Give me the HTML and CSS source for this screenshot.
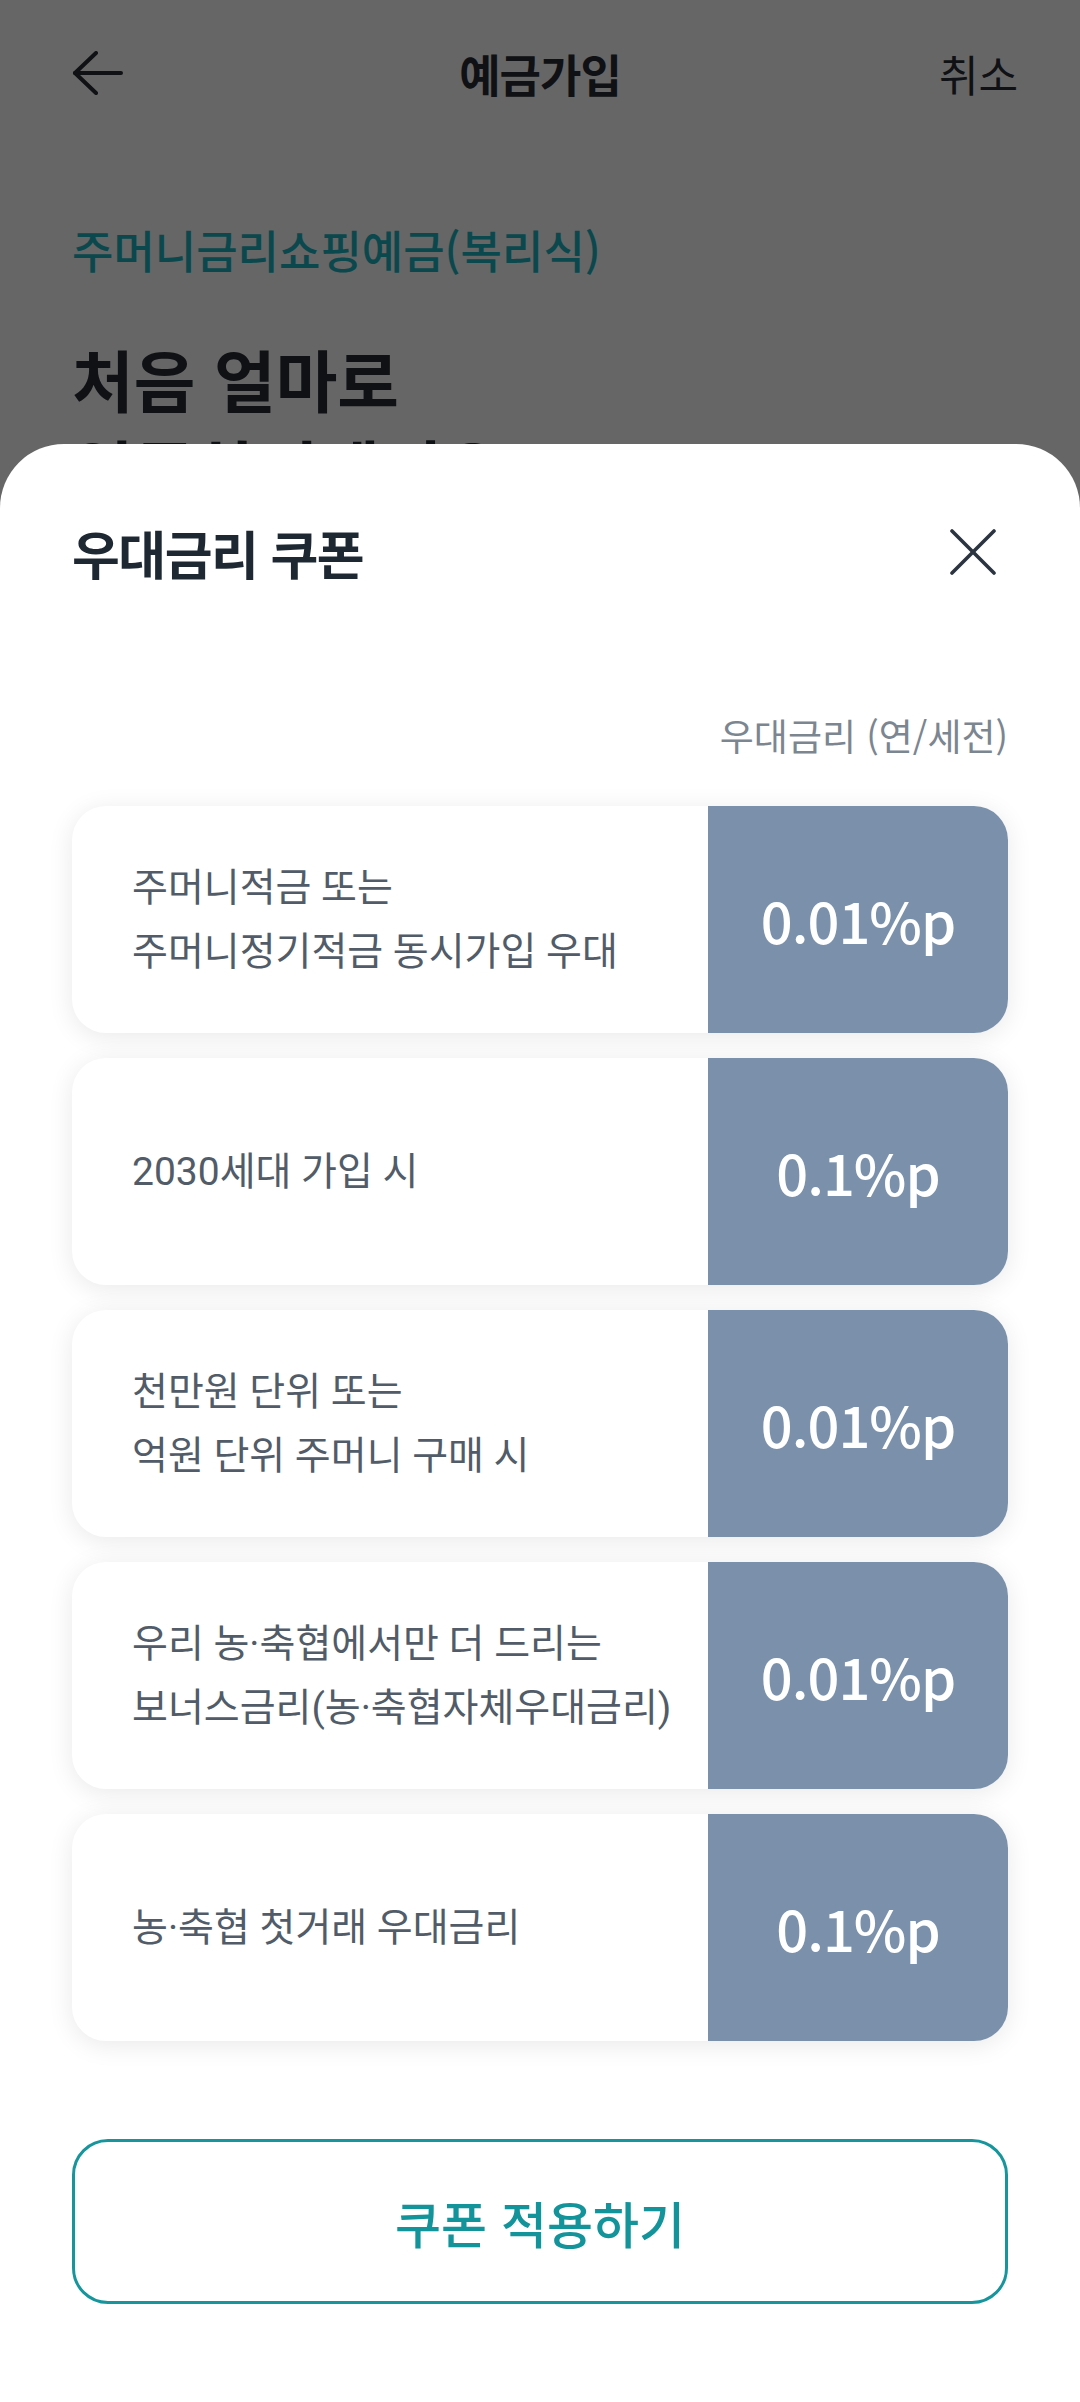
FILE: index.html
```html
<!DOCTYPE html>
<html lang="ko">
<head>
  <meta charset="UTF-8" />
  <meta name="viewport" content="width=device-width, initial-scale=1.0"/>
  <title>예금가입</title>
  <link rel="stylesheet" href="styles.css">
</head>
<body>
  <!-- Page behind the sheet -->
  <div class="page">
    <header class="topbar">
      <button class="back-btn" aria-label="뒤로">
        <svg width="52" height="44" viewBox="0 0 52 44" fill="none" stroke="currentColor" stroke-width="4" stroke-linecap="round" stroke-linejoin="round">
          <path d="M3 22 H49" />
          <path d="M24 2 L3 22 L24 42" />
        </svg>
      </button>
      <h1 class="topbar-title">예금가입</h1>
      <span class="topbar-cancel">취소</span>
    </header>

    <p class="product-name">주머니금리쇼핑예금(복리식)</p>
    <h2 class="question">처음 얼마로<br>입금하시겠어요?</h2>
  </div>

  <div class="dim"></div>

  <!-- Bottom sheet -->
  <section class="sheet">
    <div class="sheet-head">
      <h3 class="sheet-title">우대금리 쿠폰</h3>
      <button class="close-btn" aria-label="닫기">
        <svg width="46" height="46" viewBox="0 0 46 46" fill="none" stroke="currentColor" stroke-width="3.6" stroke-linecap="round">
          <path d="M2 2 L44 44" />
          <path d="M44 2 L2 44" />
        </svg>
      </button>
    </div>

    <p class="rate-caption">우대금리 (연/세전)</p>

    <ul class="coupon-list">
      <li class="coupon">
        <div class="coupon-desc">주머니적금 또는<br>주머니정기적금 동시가입 우대</div>
        <div class="coupon-rate">0.01%p</div>
      </li>
      <li class="coupon">
        <div class="coupon-desc">2030세대 가입 시</div>
        <div class="coupon-rate">0.1%p</div>
      </li>
      <li class="coupon">
        <div class="coupon-desc">천만원 단위 또는<br>억원 단위 주머니 구매 시</div>
        <div class="coupon-rate">0.01%p</div>
      </li>
      <li class="coupon">
        <div class="coupon-desc">우리 농·축협에서만 더 드리는<br>보너스금리(농·축협자체우대금리)</div>
        <div class="coupon-rate">0.01%p</div>
      </li>
      <li class="coupon">
        <div class="coupon-desc">농·축협 첫거래 우대금리</div>
        <div class="coupon-rate">0.1%p</div>
      </li>
    </ul>

    <button class="apply-btn">쿠폰 적용하기</button>
  </section>
</body>
</html>
```

FILE: styles.css
```css
* {
  box-sizing: border-box;
}

body {
  margin: 0;
  width: 1080px;
  height: 2402px;
  overflow: hidden;
  position: relative;
  background: #fff;
  font-family: 'Noto Sans CJK KR', 'Noto Sans', sans-serif;
  color: #282c33;
}

button {
  font-family: inherit;
  background: none;
  border: none;
  padding: 0;
  cursor: pointer;
}

/* Page behind */
.page {
  padding: 0 62px;
}

.topbar {
  height: 146px;
  display: grid;
  grid-template-columns: 1fr auto 1fr;
  align-items: center;
}

.back-btn {
  justify-self: start;
  display: flex;
  margin-left: 10px;
  color: #282c33;
}

.topbar-title {
  margin: 0;
  font-size: 45px;
  font-weight: 700;
  letter-spacing: -1px;
}

.topbar-cancel {
  justify-self: end;
  font-size: 43px;
}

.product-name {
  margin: 74px 0 0 10px;
  font-size: 45px;
  line-height: 60px;
  font-weight: 500;
  color: #1ab5c2;
}

.question {
  margin: 53px 0 0 10px;
  font-size: 67px;
  line-height: 90px;
  font-weight: 700;
}

.dim {
  position: absolute;
  inset: 0;
  background: rgba(0, 0, 0, 0.6);
}

/* Bottom sheet */
.sheet {
  position: absolute;
  top: 444px;
  left: 0;
  right: 0;
  bottom: 0;
  background: #fff;
  border-radius: 64px 64px 0 0;
  padding: 70px 72px 0 72px;
}

.sheet-head {
  height: 76px;
  display: flex;
  align-items: center;
  justify-content: space-between;
}

.sheet-title {
  margin: 0;
  font-size: 52px;
  font-weight: 700;
  letter-spacing: -1.5px;
  color: #1e2833;
}

.close-btn {
  width: 70px;
  height: 70px;
  display: flex;
  align-items: center;
  justify-content: center;
  color: #2b3541;
}

.rate-caption {
  margin: 120px 0 0;
  text-align: right;
  font-size: 37px;
  line-height: 50px;
  color: #7c8691;
}

.coupon-list {
  list-style: none;
  margin: 46px 0 0;
  padding: 0;
  display: flex;
  flex-direction: column;
  gap: 25px;
}

.coupon {
  height: 227px;
  display: grid;
  grid-template-columns: 1fr 300px;
  border-radius: 34px;
  overflow: hidden;
  background: #fff;
  box-shadow: 0 4px 26px rgba(0, 0, 0, 0.09);
}

.coupon-desc {
  display: flex;
  align-items: center;
  padding-left: 60px;
  font-family: Roboto, 'Noto Sans CJK KR', sans-serif;
  font-size: 39px;
  line-height: 64px;
  color: #515c68;
}

.coupon-rate {
  display: flex;
  align-items: center;
  justify-content: center;
  background: #7b91ab;
  color: #fff;
  font-size: 56px;
  font-weight: 500;
  letter-spacing: -1px;
}

.apply-btn {
  margin-top: 98px;
  width: 100%;
  height: 165px;
  border: 3px solid #16969c;
  border-radius: 36px;
  color: #13939a;
  font-size: 50px;
  font-weight: 500;
}
```
